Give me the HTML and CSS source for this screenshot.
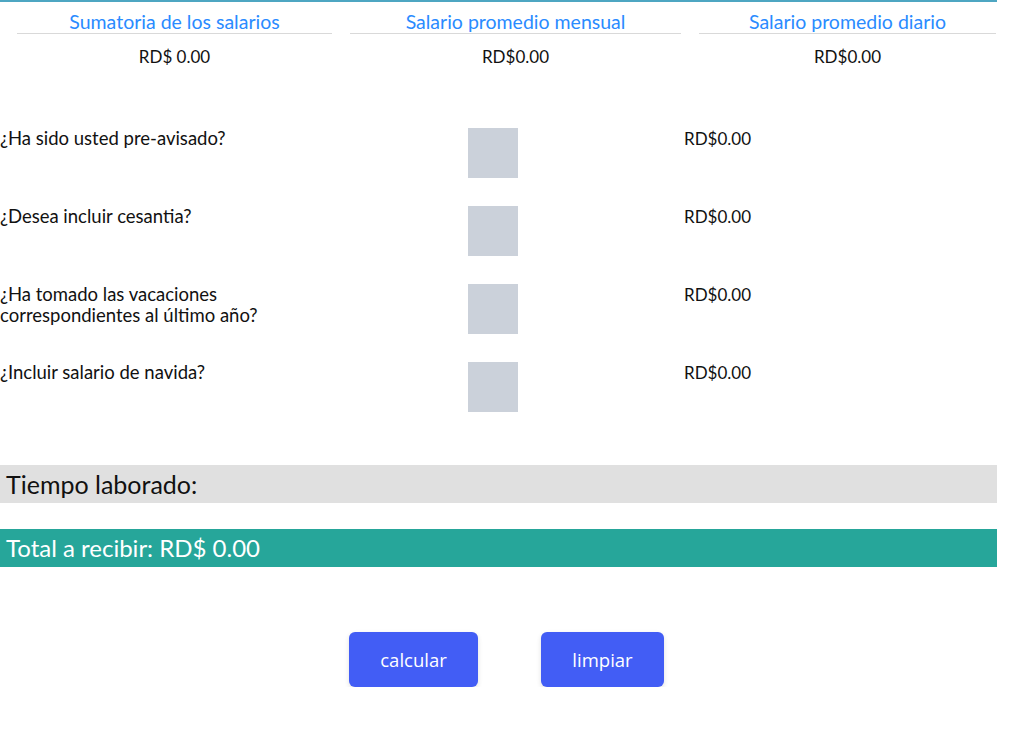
FILE: index.html
```html
<!DOCTYPE html>
<html lang="es">
<head>
<meta charset="utf-8">
<link rel="stylesheet" href="styles.css">
</head>
<body>
<div class="page">
  <div class="summary">
    <div class="col col1">
      <div class="col-head">Sumatoria de los salarios</div>
      <div class="col-val">RD$ 0.00</div>
    </div>
    <div class="col col2">
      <div class="col-head">Salario promedio mensual</div>
      <div class="col-val">RD$0.00</div>
    </div>
    <div class="col col3">
      <div class="col-head">Salario promedio diario</div>
      <div class="col-val">RD$0.00</div>
    </div>
  </div>

  <div class="questions">
    <div class="q-row">
      <div class="q-label">¿Ha sido usted pre-avisado?</div>
      <div class="q-box"></div>
      <div class="q-val">RD$0.00</div>
    </div>
    <div class="q-row">
      <div class="q-label">¿Desea incluir cesantia?</div>
      <div class="q-box"></div>
      <div class="q-val">RD$0.00</div>
    </div>
    <div class="q-row">
      <div class="q-label">¿Ha tomado las vacaciones<br>correspondientes al último año?</div>
      <div class="q-box"></div>
      <div class="q-val">RD$0.00</div>
    </div>
    <div class="q-row">
      <div class="q-label">¿Incluir salario de navida?</div>
      <div class="q-box"></div>
      <div class="q-val">RD$0.00</div>
    </div>
  </div>

  <div class="bar bar-time">Tiempo laborado:</div>
  <div class="bar bar-total">Total a recibir: RD$ 0.00</div>

  <div class="actions">
    <button class="btn btn-calc">calcular</button>
    <button class="btn btn-clear">limpiar</button>
  </div>
</div>
</body>
</html>
```
FILE: styles.css
```css
html, body {
  margin: 0;
  padding: 0;
  background: #ffffff;
}
body {
  font-family: "Lato", "Noto Sans", sans-serif;
  color: #111;
}
.page {
  width: 997px;
  border-top: 2px solid #4ea6c2;
}
.summary {
  display: flex;
  gap: 18px;
  padding-left: 17px;
}
.col1 { width: 315px; }
.col2 { width: 331px; }
.col3 { width: 297px; }
.col-head {
  text-align: center;
  color: #2a8bff;
  font-size: 19.5px;
  line-height: 22px;
  padding-top: 9px;
  border-bottom: 1px solid #d9d9d9;
}
.col-val {
  text-align: center;
  font-size: 17px;
  line-height: 22px;
  margin-top: 12px;
}
.questions {
  margin-top: 60px;
  display: flex;
  flex-direction: column;
  gap: 28px;
}
.q-row {
  display: grid;
  grid-template-columns: 468px 216px 1fr;
  height: 50px;
}
.q-label {
  font-size: 18.5px;
  line-height: 21px;
}
.q-box {
  width: 50px;
  height: 50px;
  background: #cbd1da;
}
.q-val {
  font-size: 17px;
  line-height: 21px;
}
.bar {
  height: 38px;
  line-height: 38px;
  padding-left: 6px;
}
.bar-time {
  margin-top: 53px;
  background: #e0e0e0;
  color: #111;
  font-size: 25px;
}
.bar-total {
  margin-top: 26px;
  background: #26a69a;
  color: #fff;
  font-size: 24px;
}
.actions {
  display: flex;
  gap: 63px;
  padding-left: 349px;
  margin-top: 65px;
}
.btn {
  height: 55px;
  border: none;
  border-radius: 6px;
  background: #425df5;
  color: #fff;
  font-family: "Open Sans", "Noto Sans", sans-serif;
  font-size: 18.5px;
  box-shadow: 0 2px 5px rgba(0,0,0,0.12);
  padding: 0;
}
.btn-calc { width: 129px; }
.btn-clear { width: 123px; }
```
